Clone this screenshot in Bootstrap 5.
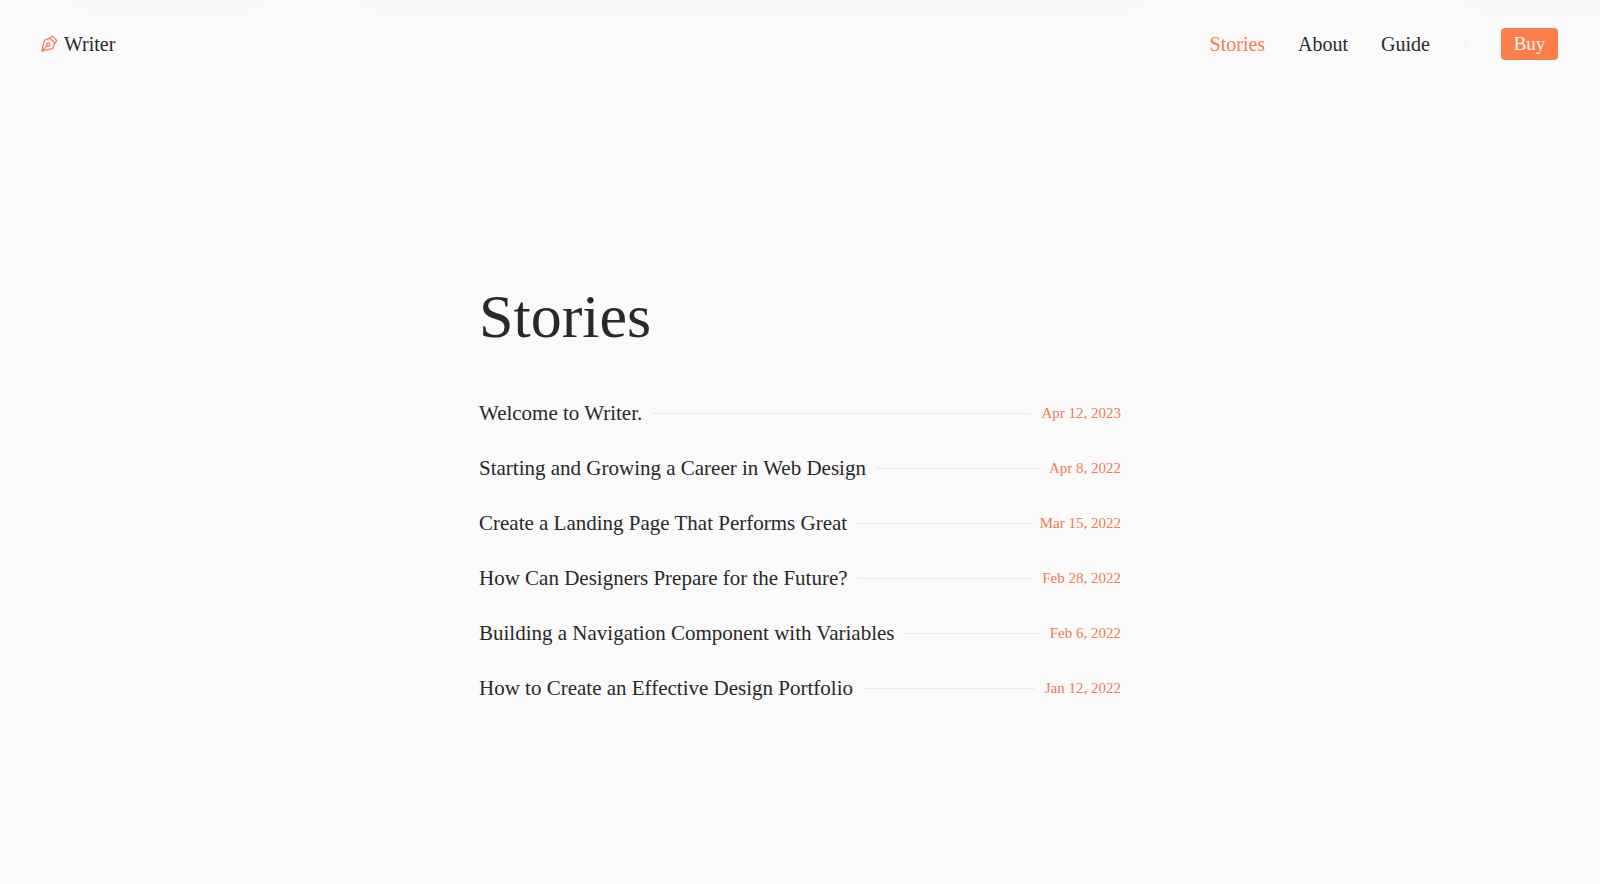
<!DOCTYPE html>
<html lang="en">
<head>
<meta charset="utf-8">
<meta name="viewport" content="width=device-width, initial-scale=1">
<title>Stories – Writer</title>
<link href="https://cdn.jsdelivr.net/npm/bootstrap@5.3.0/dist/css/bootstrap.min.css" rel="stylesheet">
<style>
  :root { --ink: #292929; --accent: #fa7d4b; --accent-text: #ee7c50; --rule: #e8e8e8; }
  body { background: #fafafa; color: var(--ink); font-family: "Liberation Serif", serif; font-size: 20px; line-height: 32px; overflow-x: hidden; }
  a { color: inherit; text-decoration: none; }
  a:hover { color: var(--accent); }
  .site-header { padding: 28px 42px 0 40px; }
  .site-header .navbar-brand { font-size: 20px; line-height: 32px; color: var(--ink); gap: 6px; }
  .site-header .navbar-nav { gap: 33px; }
  .site-header .navbar-nav .nav-link { padding: 0; color: var(--ink); }
  .site-header .navbar-nav .nav-link.active { color: var(--accent); }
  .divider { width: 1px; height: 16px; margin: 0 35px; background: #f0f0f0; }
  .btn-buy { --bs-btn-color: #fff4ee; --bs-btn-bg: var(--accent); --bs-btn-hover-bg: #ea6c3a; --bs-btn-hover-color: #fff; --bs-btn-border-radius: 4px; border: 0; min-width: 57px; padding: 0 12px; font-size: 19px; line-height: 32px; }
  .top-shade { position: absolute; top: -12px; height: 12px; box-shadow: 0 0 26px rgba(0, 0, 0, .05); pointer-events: none; }
  .shade-a { left: 5%; width: 11%; }
  .shade-b { left: 23%; width: 48%; }
  .shade-c { left: 92%; width: 12%; }
  .page-column { max-width: 642px; padding-top: 218px; }
  h1 { font-size: 62px; font-weight: 400; line-height: 76px; margin: 0 0 32px; }
  .story-link { font-size: 21px; line-height: 55px; gap: 10px; }
  .story-link time { font-size: 15px; color: var(--accent-text); }
  .story-rule { height: 1px; background: var(--rule); }
</style>
</head>
<body>
<div class="position-absolute top-0 start-0 w-100 h-100 overflow-hidden pe-none" aria-hidden="true">
  <div class="top-shade shade-a"></div>
  <div class="top-shade shade-b"></div>
  <div class="top-shade shade-c"></div>
</div>
<header class="site-header position-relative">
  <nav class="navbar navbar-expand p-0" aria-label="Main">
    <a class="navbar-brand d-flex align-items-center p-0 m-0" href="#">
      <svg width="18" height="18" viewBox="0 0 18 18" fill="none" stroke="#f4764a" stroke-width="1.2" stroke-linejoin="round" stroke-linecap="round" aria-hidden="true">
        <path d="M9.9 3.1 11.6 1.4Q12.2.9 12.8 1.4L16.5 5.1Q17 5.7 16.5 6.3L14.8 8Z"/>
        <path d="M9.9 3.1 4.8 5Q4.3 5.2 4.2 5.7L2 15.9 12.2 13.7Q12.7 13.6 12.9 13.1L14.8 8"/>
        <path d="M2 15.9 7 10.9"/><circle cx="8.2" cy="9.7" r="1.6"/>
      </svg>
      <span>Writer</span>
    </a>
    <div class="d-flex align-items-center ms-auto">
      <ul class="navbar-nav">
        <li class="nav-item"><a class="nav-link active" aria-current="page" href="#">Stories</a></li>
        <li class="nav-item"><a class="nav-link" href="#">About</a></li>
        <li class="nav-item"><a class="nav-link" href="#">Guide</a></li>
      </ul>
      <div class="divider"></div>
      <button class="btn btn-buy" type="button">Buy</button>
    </div>
  </nav>
</header>
<main class="page-column mx-auto position-relative">
  <h1>Stories</h1>
  <ul class="list-unstyled m-0">
    <li><a class="story-link d-flex align-items-center" href="#"><span>Welcome to Writer.</span><span class="story-rule flex-grow-1"></span><time datetime="2023-04-12">Apr 12, 2023</time></a></li>
    <li><a class="story-link d-flex align-items-center" href="#"><span>Starting and Growing a Career in Web Design</span><span class="story-rule flex-grow-1"></span><time datetime="2022-04-08">Apr 8, 2022</time></a></li>
    <li><a class="story-link d-flex align-items-center" href="#"><span>Create a Landing Page That Performs Great</span><span class="story-rule flex-grow-1"></span><time datetime="2022-03-15">Mar 15, 2022</time></a></li>
    <li><a class="story-link d-flex align-items-center" href="#"><span>How Can Designers Prepare for the Future?</span><span class="story-rule flex-grow-1"></span><time datetime="2022-02-28">Feb 28, 2022</time></a></li>
    <li><a class="story-link d-flex align-items-center" href="#"><span>Building a Navigation Component with Variables</span><span class="story-rule flex-grow-1"></span><time datetime="2022-02-06">Feb 6, 2022</time></a></li>
    <li><a class="story-link d-flex align-items-center" href="#"><span>How to Create an Effective Design Portfolio</span><span class="story-rule flex-grow-1"></span><time datetime="2022-01-12">Jan 12, 2022</time></a></li>
  </ul>
</main>
<script src="https://cdn.jsdelivr.net/npm/bootstrap@5.3.0/dist/js/bootstrap.bundle.min.js"></script>
</body>
</html>
